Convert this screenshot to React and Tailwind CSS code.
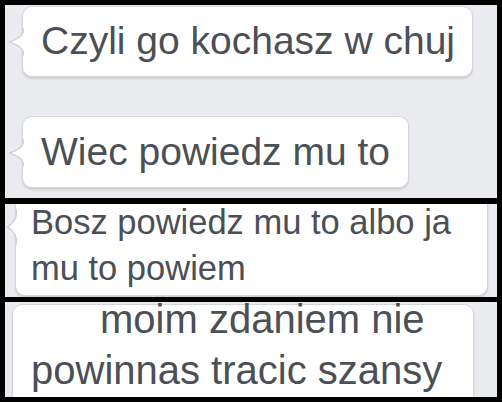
import React from 'react';

const font = { fontFamily: '"Liberation Sans", Arial, sans-serif' };

const Tail = ({ w, h, className }) => (
  <svg width={w} height={h} viewBox={`0 0 ${w} ${h}`} className={className}>
    <path
      d={`M${w} 0 Q${w} ${h * 0.35} 0 ${h / 2} Q${w} ${h * 0.65} ${w} ${h}`}
      fill="#ffffff"
      stroke="#cfd2d7"
      strokeWidth="1.5"
    />
  </svg>
);

const Bubble = ({ children, className }) => (
  <div className={`relative bg-white border border-[#d3d6db] rounded-[10px] shadow-[0_2px_2px_rgba(0,0,0,0.12)] ${className}`}>
    {children}
  </div>
);

const App = () => {
  return (
    <div className="w-[502px] h-[402px] bg-black px-[5px] pt-[5px] flex flex-col text-[#4b4f56]" style={font}>
      {/* panel 1 */}
      <div className="h-[193px] bg-[#e9ebee] overflow-hidden flex flex-col pl-[17px] pt-[1px]">
        <Bubble className="w-[451px] h-[71px] pl-[18px] pt-[11px]">
          <Tail w={15} h={28} className="absolute left-[-14px] top-[21px]" />
          <div className="text-[39px] leading-[45px] whitespace-nowrap">Czyli go kochasz w chuj</div>
        </Bubble>
        <Bubble className="w-[387px] h-[72px] mt-[39px] pl-[18px] pt-[12px]">
          <Tail w={15} h={28} className="absolute left-[-14px] top-[22px]" />
          <div className="text-[39px] leading-[45px] whitespace-nowrap">Wiec powiedz mu to</div>
        </Bubble>
      </div>

      {/* panel 2 */}
      <div className="h-[93px] mt-[6px] bg-[#e9ebee] overflow-hidden pl-[10px]">
        <Bubble className="w-[473px] mt-[-20px] pt-[14px] pb-[4px] pl-[15px]">
          <Tail w={10} h={36} className="absolute left-[-9px] top-[24px]" />
          <div className="text-[34.5px] leading-[46px] whitespace-nowrap">Bosz powiedz mu to albo ja</div>
          <div className="text-[34.5px] leading-[46px] whitespace-nowrap">mu to powiem</div>
        </Bubble>
      </div>

      {/* panel 3 */}
      <div className="h-[95px] mt-[5px] bg-[#e9ebee] overflow-hidden pl-[7px] pt-[2px]">
        <Bubble className="w-[462px] h-[120px] pl-[18px]">
          <div className="mt-[-11px] text-[40px] leading-[51px] whitespace-nowrap">
            <div className="pl-[69px]">moim zdaniem nie</div>
            <div>powinnas tracic szansy</div>
          </div>
        </Bubble>
      </div>
    </div>
  );
};

export default App;
